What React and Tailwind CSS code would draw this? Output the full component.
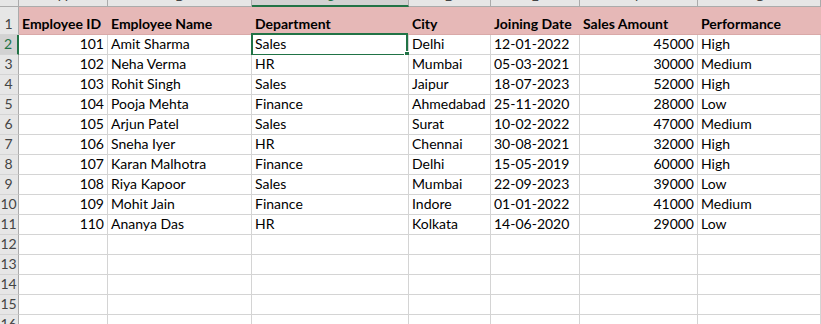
import React from "react";

const COLS = [
  { key: "A", w: "w-[89px]", title: "Employee ID", align: "right" },
  { key: "B", w: "w-[144px]", title: "Employee Name" },
  { key: "C", w: "w-[157px]", title: "Department" },
  { key: "D", w: "w-[82px]", title: "City" },
  { key: "E", w: "w-[89px]", title: "Joining Date" },
  { key: "F", w: "w-[118px]", title: "Sales Amount", align: "right" },
  { key: "G", w: "w-[123px]", title: "Performance" },
];

const ROWS = [
  [101, "Amit Sharma", "Sales", "Delhi", "12-01-2022", 45000, "High"],
  [102, "Neha Verma", "HR", "Mumbai", "05-03-2021", 30000, "Medium"],
  [103, "Rohit Singh", "Sales", "Jaipur", "18-07-2023", 52000, "High"],
  [104, "Pooja Mehta", "Finance", "Ahmedabad", "25-11-2020", 28000, "Low"],
  [105, "Arjun Patel", "Sales", "Surat", "10-02-2022", 47000, "Medium"],
  [106, "Sneha Iyer", "HR", "Chennai", "30-08-2021", 32000, "High"],
  [107, "Karan Malhotra", "Finance", "Delhi", "15-05-2019", 60000, "High"],
  [108, "Riya Kapoor", "Sales", "Mumbai", "22-09-2023", 39000, "Low"],
  [109, "Mohit Jain", "Finance", "Indore", "01-01-2022", 41000, "Medium"],
  [110, "Ananya Das", "HR", "Kolkata", "14-06-2020", 29000, "Low"],
];

const EMPTY_ROWS = [12, 13, 14, 15, 16];

function RowHeader({ n, selected, tall }) {
  return (
    <div
      className={`${tall ? "h-[28px]" : "h-[20px]"} w-[19px] shrink-0 flex items-end justify-center pb-[1px] leading-[18px] text-[14px] border-b border-[#d4d4d4] ${
        selected
          ? "bg-[#d2d2d2] text-[#217346] border-r-2 border-r-[#217346]"
          : "bg-[#e6e6e6] text-[#444444] border-r border-r-[#ababab]"
      }`}
    >
      <span className="-ml-[1px]">{n}</span>
    </div>
  );
}

function Cell({ col, value, selected }) {
  return (
    <div
      className={`${col.w} relative h-[20px] shrink-0 flex items-end pb-[1px] border-r border-b border-[#d4d4d4] bg-white overflow-visible`}
    >
      <span
        className={`block w-full leading-[18px] whitespace-nowrap ${
          col.align === "right" ? "text-right pr-[3px]" : "pl-[3px]"
        }`}
      >
        {value}
      </span>
      {selected ? (
        <>
          <div className="absolute -left-[1px] -top-[2px] right-0 -bottom-[2px] border-2 border-[#217346] pointer-events-none" />
          <div className="absolute -right-[3px] -bottom-[3px] w-[7px] h-[6px] bg-[#217346] border border-white" />
        </>
      ) : null}
    </div>
  );
}

export default function App() {
  return (
    <div
      className="w-[821px] h-[324px] overflow-hidden bg-white text-black text-[14px]"
      style={{ fontFamily: "Lato, 'Liberation Sans', sans-serif" }}
    >
      {/* column letters, mostly scrolled off the top */}
      <div className="flex h-[7px]">
        <div className="w-[19px] shrink-0 bg-[#e6e6e6] border-r border-b border-[#ababab]" />
        {COLS.map((c) => (
          <div
            key={c.key}
            className={`${c.w} shrink-0 overflow-hidden border-r border-[#ababab] ${
              c.key === "C"
                ? "bg-[#d2d2d2] border-b-2 border-b-[#217346] text-[#217346]"
                : "bg-[#e6e6e6] border-b border-b-[#ababab] text-[#444444]"
            }`}
          >
            <div className="-mt-[10px] text-center text-[13px] leading-[13px]">{c.key}</div>
          </div>
        ))}
      </div>

      {/* header row */}
      <div className="flex">
        <RowHeader n={1} tall />
        <div className="flex bg-[#e6b8b7] border-b border-[#d9a9a8]">
          {COLS.map((c) => (
            <div
              key={c.key}
              className={`${c.w} h-[27px] shrink-0 flex items-end pb-[1px] pl-[3px] font-bold leading-[18px] whitespace-nowrap`}
            >
              {c.title}
            </div>
          ))}
        </div>
      </div>

      {ROWS.map((r, i) => (
        <div key={i} className="flex">
          <RowHeader n={i + 2} selected={i === 0} />
          {COLS.map((c, j) => (
            <Cell key={c.key} col={c} value={r[j]} selected={i === 0 && c.key === "C"} />
          ))}
        </div>
      ))}

      {EMPTY_ROWS.map((n) => (
        <div key={n} className="flex">
          <RowHeader n={n} />
          {COLS.map((c) => (
            <Cell key={c.key} col={c} value="" />
          ))}
        </div>
      ))}
    </div>
  );
}
